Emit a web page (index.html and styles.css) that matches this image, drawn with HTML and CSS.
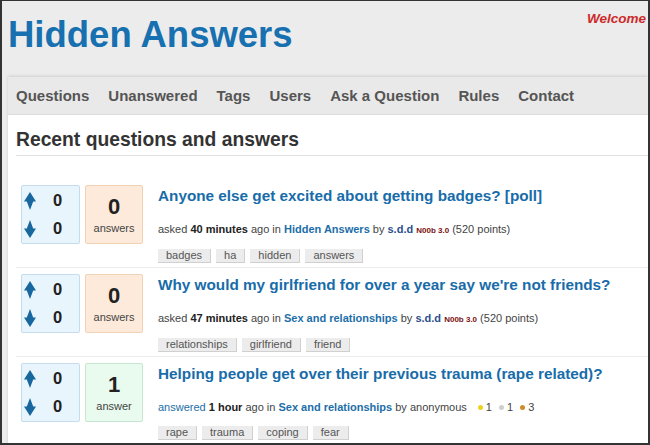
FILE: index.html
```html
<!DOCTYPE html>
<html>
<head>
    <title>Hidden Answers</title>
    <link rel="stylesheet" href="styles.css">
</head>
<body>
<div class="frame">
    <div class="site-header">
        <h1 class="logo">Hidden Answers</h1>
        <div class="welcome">Welcome</div>
    </div>

    <div class="main">
        <div class="nav">
            <a href="#">Questions</a>
            <a href="#">Unanswered</a>
            <a href="#">Tags</a>
            <a href="#">Users</a>
            <a href="#">Ask a Question</a>
            <a href="#">Rules</a>
            <a href="#">Contact</a>
        </div>

        <div class="content">
            <h2>Recent questions and answers</h2>

            <div class="q-list">
                <div class="q-item">
                    <div class="votes">
                        <div class="vote-row">
                            <svg class="arrow" width="12" height="18" viewBox="0 0 12 18"><path d="M6 0 L12 9.5 L9.2 9.5 L6 18 L2.8 9.5 L0 9.5 Z"/></svg>
                            <span>0</span>
                        </div>
                        <div class="vote-row">
                            <svg class="arrow" width="12" height="18" viewBox="0 0 12 18"><path d="M6 18 L12 8.5 L9.2 8.5 L6 0 L2.8 8.5 L0 8.5 Z"/></svg>
                            <span>0</span>
                        </div>
                    </div>
                    <div class="acount">
                        <span class="num">0</span>
                        <span class="label">answers</span>
                    </div>
                    <div class="q-main">
                        <a class="q-title" href="#">Anyone else get excited about getting badges? [poll]</a>
                        <div class="meta">
                            asked <b>40 minutes</b> ago in <a class="cat" href="#">Hidden Answers</a> by <a class="user" href="#">s.d.d</a> <span class="level">N00b 3.0</span> (520 points)
                        </div>
                        <div class="tags">
                            <span class="tag">badges</span>
                            <span class="tag">ha</span>
                            <span class="tag">hidden</span>
                            <span class="tag">answers</span>
                        </div>
                    </div>
                </div>

                <div class="q-item">
                    <div class="votes">
                        <div class="vote-row">
                            <svg class="arrow" width="12" height="18" viewBox="0 0 12 18"><path d="M6 0 L12 9.5 L9.2 9.5 L6 18 L2.8 9.5 L0 9.5 Z"/></svg>
                            <span>0</span>
                        </div>
                        <div class="vote-row">
                            <svg class="arrow" width="12" height="18" viewBox="0 0 12 18"><path d="M6 18 L12 8.5 L9.2 8.5 L6 0 L2.8 8.5 L0 8.5 Z"/></svg>
                            <span>0</span>
                        </div>
                    </div>
                    <div class="acount">
                        <span class="num">0</span>
                        <span class="label">answers</span>
                    </div>
                    <div class="q-main">
                        <a class="q-title" href="#">Why would my girlfriend for over a year say we're not friends?</a>
                        <div class="meta">
                            asked <b>47 minutes</b> ago in <a class="cat" href="#">Sex and relationships</a> by <a class="user" href="#">s.d.d</a> <span class="level">N00b 3.0</span> (520 points)
                        </div>
                        <div class="tags">
                            <span class="tag">relationships</span>
                            <span class="tag">girlfriend</span>
                            <span class="tag">friend</span>
                        </div>
                    </div>
                </div>

                <div class="q-item">
                    <div class="votes">
                        <div class="vote-row">
                            <svg class="arrow" width="12" height="18" viewBox="0 0 12 18"><path d="M6 0 L12 9.5 L9.2 9.5 L6 18 L2.8 9.5 L0 9.5 Z"/></svg>
                            <span>0</span>
                        </div>
                        <div class="vote-row">
                            <svg class="arrow" width="12" height="18" viewBox="0 0 12 18"><path d="M6 18 L12 8.5 L9.2 8.5 L6 0 L2.8 8.5 L0 8.5 Z"/></svg>
                            <span>0</span>
                        </div>
                    </div>
                    <div class="acount answered">
                        <span class="num">1</span>
                        <span class="label">answer</span>
                    </div>
                    <div class="q-main">
                        <a class="q-title" href="#">Helping people get over their previous trauma (rape related)?</a>
                        <div class="meta">
                            <a class="what" href="#">answered</a> <b>1 hour</b> ago in <a class="cat" href="#">Sex and relationships</a> by anonymous
                            <span class="badges">
                                <span class="dot gold"></span>1
                                <span class="dot silver"></span>1
                                <span class="dot bronze"></span>3
                            </span>
                        </div>
                        <div class="tags">
                            <span class="tag">rape</span>
                            <span class="tag">trauma</span>
                            <span class="tag">coping</span>
                            <span class="tag">fear</span>
                        </div>
                    </div>
                </div>
            </div>
        </div>
    </div>
</div>
</body>
</html>
```

FILE: styles.css
```css
html, body {
    margin: 0;
    padding: 0;
}
body {
    font-family: "Liberation Sans", Arial, sans-serif;
    color: #333;
}
a {
    text-decoration: none;
}
.frame {
    height: 445px;
    box-sizing: border-box;
    border: 2px solid #333;
    border-top-width: 1px;
    background: #ececec;
    overflow: hidden;
}
.site-header {
    height: 76px;
    padding-left: 6px;
    display: flex;
    justify-content: space-between;
    align-items: flex-start;
}
.logo {
    margin: 0;
    padding-top: 16px;
    font-size: 36.5px;
    line-height: 1;
    font-weight: bold;
    color: #1770b0;
}
.welcome {
    padding-top: 10px;
    padding-right: 2px;
    font-size: 13.5px;
    font-weight: bold;
    font-style: italic;
    color: #cc2a2a;
}
.main {
    margin-left: 6px;
    height: 370px;
    background: #fff;
    box-shadow: 0 -1px 3px rgba(0, 0, 0, 0.12);
}
.nav {
    height: 37px;
    background: #e9e9e9;
    border-bottom: 1px solid #dcdcdc;
    display: flex;
    align-items: center;
    gap: 19px;
    padding-left: 8px;
}
.nav a {
    font-size: 15px;
    font-weight: bold;
    color: #555;
}
.content {
    padding-left: 8px;
}
.content h2 {
    margin: 13px 0 0;
    padding-bottom: 3px;
    font-size: 19.3px;
    line-height: 24px;
    color: #333;
    border-bottom: 1px solid #e0e0e0;
}
.q-list {
    margin-top: 23px;
}
.q-item {
    display: flex;
    padding: 6px 0 4px 5px;
    border-top: 1px solid #ececec;
}
.q-item:first-child {
    border-top: none;
}
.votes,
.acount {
    box-sizing: border-box;
    height: 59px;
    border-radius: 2px;
    display: flex;
    flex-direction: column;
    justify-content: center;
}
.votes {
    width: 59px;
    background: #e9f5fd;
    border: 1px solid #c4dced;
    gap: 8px;
}
.vote-row {
    display: flex;
    align-items: center;
    height: 20px;
    padding-left: 2px;
    font-size: 16.5px;
    font-weight: bold;
    color: #222;
}
.vote-row span {
    margin-left: 17px;
}
.arrow {
    fill: #18679f;
}
.acount {
    width: 58px;
    margin-left: 5px;
    background: #fdeadb;
    border: 1px solid #f1d2b4;
    align-items: center;
    color: #333;
}
.acount.answered {
    background: #e9fbee;
    border-color: #c6e6cf;
}
.acount .num {
    font-size: 22px;
    line-height: 24px;
    font-weight: bold;
    color: #222;
}
.acount .label {
    margin-top: 3px;
    font-size: 11px;
    line-height: 13px;
    color: #444;
}
.q-main {
    margin-left: 15px;
    white-space: nowrap;
}
.q-title {
    display: block;
    margin-top: 1px;
    font-size: 15.3px;
    line-height: 20px;
    font-weight: bold;
    color: #186ca9;
}
.meta {
    margin-top: 16px;
    font-size: 11px;
    line-height: 15px;
    color: #444;
}
.meta b {
    color: #222;
}
.meta .cat {
    font-weight: bold;
    color: #1c6ea8;
}
.meta .what {
    color: #1c6ea8;
}
.meta .user {
    font-weight: bold;
    color: #2d4f8e;
}
.level {
    font-size: 8px;
    font-weight: bold;
    color: #7a1212;
}
.badges {
    margin-left: 4px;
}
.dot {
    display: inline-block;
    width: 5px;
    height: 5px;
    border-radius: 50%;
    margin: 0 3px 1px 4px;
    vertical-align: middle;
}
.dot.gold {
    background: #efd120;
}
.dot.silver {
    background: #cfcfcf;
}
.dot.bronze {
    background: #cf8d2a;
}
.tags {
    margin-top: 11px;
    display: flex;
    gap: 5px;
}
.tag {
    font-size: 11px;
    line-height: 13px;
    padding: 0 8px;
    background: #ececec;
    border-right: 1px solid #d0d0d0;
    border-bottom: 1px solid #d0d0d0;
    color: #555;
}
```
